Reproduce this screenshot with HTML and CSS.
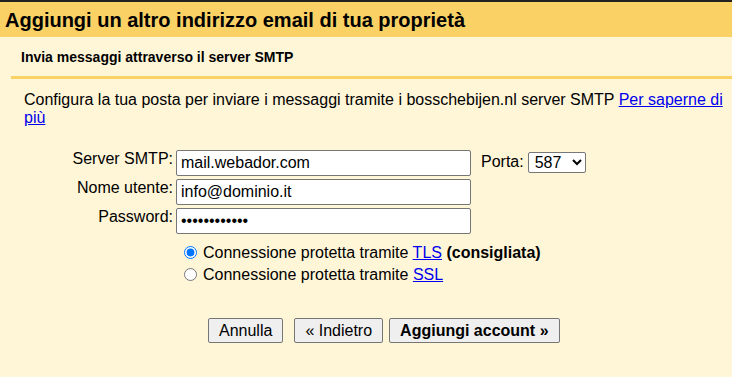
FILE: index.html
```html
<!DOCTYPE html>
<html lang="it">

<head>
    <meta charset="UTF-8">
    <title>Aggiungi un altro indirizzo email</title>
    <link rel="stylesheet" href="styles.css">
</head>

<body>
    <div class="dialog">
        <h1 class="dialog-title">Aggiungi un altro indirizzo email di tua proprietà</h1>

        <div class="step-title">Invia messaggi attraverso il server SMTP</div>

        <div class="step-body">
            <p class="intro">
                Configura la tua posta per inviare i messaggi tramite i bosschebijen.nl server SMTP
                <a href="#">Per saperne di più</a>
            </p>

            <div class="smtp-form">
                <label class="field-label" for="smtp-server">Server SMTP:</label>
                <div class="field-row">
                    <input id="smtp-server" class="text-input" type="text" value="mail.webador.com">
                    <label class="port-label" for="smtp-port">Porta:</label>
                    <select id="smtp-port" class="port-select">
                        <option>587</option>
                        <option>465</option>
                        <option>25</option>
                    </select>
                </div>

                <label class="field-label" for="smtp-user">Nome utente:</label>
                <div class="field-row">
                    <input id="smtp-user" class="text-input" type="text" value="info@dominio.it">
                </div>

                <label class="field-label" for="smtp-pass">Password:</label>
                <div class="field-row">
                    <input id="smtp-pass" class="text-input" type="password" value="passwordtest">
                </div>

                <div class="radio-group">
                    <label class="radio-row">
                        <input type="radio" name="security" checked>Connessione protetta tramite <a href="#">TLS</a> <strong>(consigliata)</strong>
                    </label>
                    <label class="radio-row">
                        <input type="radio" name="security">Connessione protetta tramite <a href="#">SSL</a>
                    </label>
                </div>
            </div>

            <div class="actions">
                <button class="btn btn-cancel">Annulla</button>
                <button class="btn">« Indietro</button>
                <button class="btn btn-primary">Aggiungi account »</button>
            </div>
        </div>
    </div>
</body>

</html>
```

FILE: styles.css
```css
body {
    font-family: "Liberation Sans", Arial, sans-serif;
    font-size: 16px;
    background: #fff6d8;
    color: #000;
    margin: 0;
    padding: 0;
}

input,
select,
button {
    font: inherit;
}

.dialog {
    border-top: 2px solid #222;
}

.dialog-title {
    margin: 0;
    height: 35px;
    line-height: 36px;
    padding-left: 5px;
    background: #f9d165;
    font-size: 20px;
    font-weight: bold;
    white-space: nowrap;
}

.step-title {
    height: 39px;
    line-height: 40px;
    font-size: 14px;
    font-weight: bold;
    border-bottom: 3px solid #f9d165;
    margin-left: 11px;
    padding-left: 10px;
}

.step-body {
    padding: 0 0 0 24px;
}

.intro {
    margin: 12px 0 0;
    line-height: 18px;
    width: 700px;
}

a {
    color: #0000ee;
}

.smtp-form {
    display: grid;
    grid-template-columns: 149px auto;
    column-gap: 3px;
    row-gap: 3px;
    margin-top: 23px;
}

.field-label {
    text-align: right;
    line-height: 18px;
}

.field-row {
    display: flex;
    align-items: flex-start;
}

.text-input {
    width: 295px;
    height: 26px;
    box-sizing: border-box;
    border: 1px solid #767676;
    border-radius: 2px;
    background: #fff;
    padding: 1px 4px;
    margin: 0;
}

.port-label {
    margin-left: 10px;
    margin-top: 3px;
}

.port-select {
    margin: 2px 0 0 4px;
    height: 21px;
    width: 58px;
    border: 1px solid #767676;
    border-radius: 2px;
    background: #fff;
    padding: 0 0 0 2px;
}

.radio-group {
    grid-column: 2;
    margin-top: 5px;
    padding-left: 5px;
}

.radio-row {
    display: block;
    height: 22px;
    line-height: 22px;
    white-space: nowrap;
}

.radio-row input {
    width: 13px;
    height: 13px;
    margin: 0 6px 0 3px;
    vertical-align: -1px;
    accent-color: #0075ff;
}

.actions {
    display: flex;
    margin: 32px 0 0 184px;
}

.btn {
    height: 25px;
    padding: 0 10px;
    background: #efefef;
    border: 1px solid #767676;
    border-radius: 2px;
    color: #000;
}

.btn + .btn {
    margin-left: 6px;
}

.btn-cancel {
    margin-right: 5px;
}

.btn-primary {
    font-weight: bold;
}
```
